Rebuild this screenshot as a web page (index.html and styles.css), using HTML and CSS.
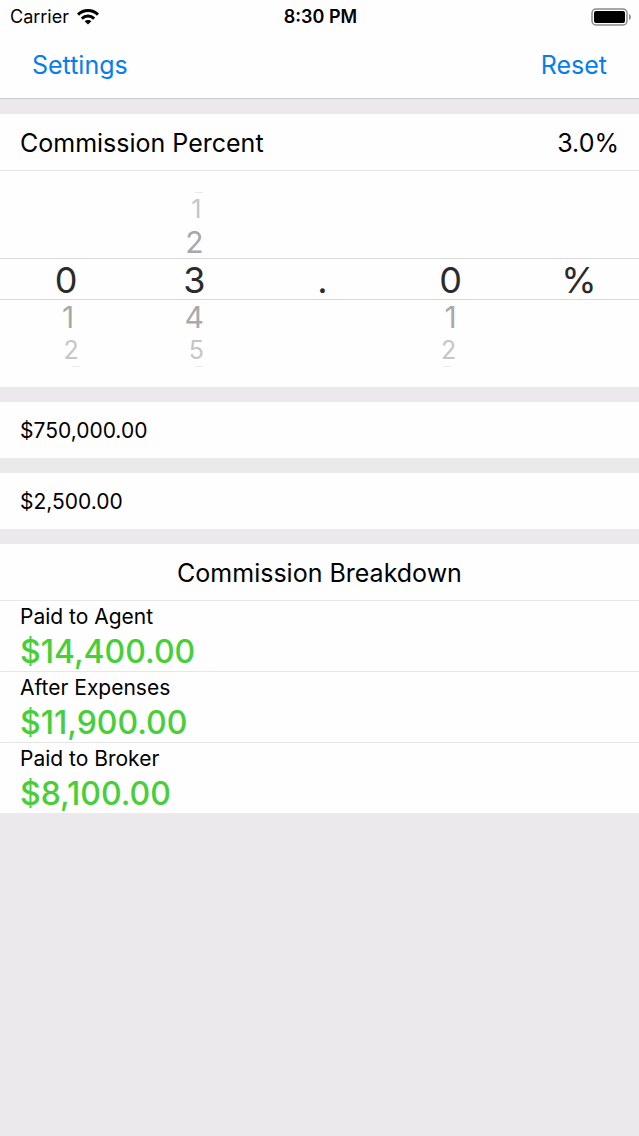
FILE: index.html
```
<!DOCTYPE html>
<html lang="en">

<head>
    <meta charset="UTF-8">
    <meta name="viewport" content="width=device-width, initial-scale=1.0">
    <link rel="stylesheet" href="styles.css">
    <title>Commission Calculator</title>
</head>

<body>
    <header>
        <div class="status">
            <div class="carrier">
                <span>Carrier</span>
                <svg class="wifi" viewBox="0 0 22 16" aria-hidden="true">
                    <path d="M1 5.600C6.800 .2 15.200 .2 21 5.600M4.800 9.600c3.600-3.400 8.800-3.400 12.400 0" fill="none" stroke="#000" stroke-width="3"/>
                    <path d="M7.600 12.300c2-1.900 4.800-1.900 6.800 0L11 15.600z"/>
                </svg>
            </div>
            <b class="time">8:30 PM</b>
            <svg class="battery" viewBox="0 0 40 18" aria-hidden="true">
                <rect x="1" y="1" width="35" height="16" rx="4" fill="none" stroke="#8b898d" stroke-width="1.500"/>
                <rect x="3" y="3" width="31" height="12" rx="2"/>
                <path d="M38 6c2.500 1 2.500 5 0 6z" fill="#8b898d"/>
            </svg>
        </div>
        <nav>
            <button type="button">Settings</button>
            <button type="button">Reset</button>
        </nav>
    </header>

    <main>
        <section>
            <div class="row">
                <h2>Commission Percent</h2>
                <output>3.0%</output>
            </div>
            <div class="picker">
                <div class="wheel tens edge-bottom" role="radiogroup" aria-label="Tens">
                    <label class="selected"><input type="radio" name="tens" checked>0</label>
                    <label class="near below"><input type="radio" name="tens">1</label>
                    <label class="far below"><input type="radio" name="tens">2</label>
                </div>
                <div class="wheel units edge-top edge-bottom" role="radiogroup" aria-label="Units">
                    <label class="far above"><input type="radio" name="units">1</label>
                    <label class="near above"><input type="radio" name="units">2</label>
                    <label class="selected"><input type="radio" name="units" checked>3</label>
                    <label class="near below"><input type="radio" name="units">4</label>
                    <label class="far below"><input type="radio" name="units">5</label>
                </div>
                <div class="wheel"><span class="selected">.</span></div>
                <div class="wheel tenths edge-bottom" role="radiogroup" aria-label="Tenths">
                    <label class="selected"><input type="radio" name="tenths" checked>0</label>
                    <label class="near below"><input type="radio" name="tenths">1</label>
                    <label class="far below"><input type="radio" name="tenths">2</label>
                </div>
                <div class="wheel"><span class="selected">%</span></div>
            </div>
        </section>

        <section>
            <input type="text" class="amount" aria-label="Sale price" value="$750,000.00">
        </section>

        <section>
            <input type="text" class="amount" aria-label="Expenses" value="$2,500.00">
        </section>

        <section>
            <div class="row centered">
                <h2>Commission Breakdown</h2>
            </div>
            <dl>
                <div class="result">
                    <dt>Paid to Agent</dt>
                    <dd>$14,400.00</dd>
                </div>
                <div class="result">
                    <dt>After Expenses</dt>
                    <dd>$11,900.00</dd>
                </div>
                <div class="result">
                    <dt>Paid to Broker</dt>
                    <dd>$8,100.00</dd>
                </div>
            </dl>
        </section>
    </main>
</body>

</html>
```
FILE: styles.css
```
* {
    box-sizing: border-box;
}

body {
    margin: 0;
    background: #ebe9ec;
    color: #000;
    font-family: Inter, "Liberation Sans", sans-serif;
}

header {
    background: #fefefe;
    border-bottom: 1px solid #c9c8cb;
}

.status {
    display: grid;
    grid-template-columns: 1fr auto 1fr;
    align-items: center;
    height: 33px;
    padding: 0 8px 0 10px;
    font-size: 18px;
}

.carrier {
    display: flex;
    align-items: center;
    gap: 8px;
}

.wifi {
    width: 22px;
    height: 16px;
}

.time {
    font-weight: 600;
}

.battery {
    width: 40px;
    height: 18px;
    justify-self: end;
}

nav {
    display: flex;
    justify-content: space-between;
    height: 65px;
    padding: 0 32px;
}

nav button {
    padding: 0;
    border: none;
    background: none;
    color: #087cf0;
    font: 25px/65px Inter, "Liberation Sans", sans-serif;
    cursor: pointer;
}

main {
    display: flex;
    flex-direction: column;
    gap: 15px;
    padding-top: 15px;
}

section {
    background: #fefefe;
    overflow: hidden;
}

.row {
    display: flex;
    align-items: center;
    justify-content: space-between;
    height: 57px;
    padding: 2px 20px 0;
    border-bottom: 1px solid #e6e5e7;
    font-size: 25px;
}

.centered {
    justify-content: center;
}

h2 {
    margin: 0;
    font-size: 25px;
    font-weight: 400;
}

/* Five equal wheels, the selected row sits between the two lines */
.picker {
    display: grid;
    grid-template-columns: repeat(5, 1fr);
    height: 216px;
    margin-right: -4px;
    padding-left: 2px;
    background: linear-gradient(#d9d8db, #d9d8db) 0 87px / 100% 1px no-repeat,
        linear-gradient(#d9d8db, #d9d8db) 0 128px / 100% 1px no-repeat;
}

.wheel {
    display: grid;
    grid-template-rows: 22px 32px 34px 41px 34px 32px 21px;
    justify-items: center;
    align-items: center;
}

.wheel input {
    position: absolute;
    opacity: 0;
    pointer-events: none;
}

.selected {
    grid-row: 4;
    padding-top: 2px;
    color: #2b2a2d;
    font-size: 36px;
    line-height: 39px;
}

.near {
    color: #a9a8ab;
    font-size: 30px;
    line-height: 34px;
}

.far {
    color: #c6c5c8;
    font-size: 25px;
    line-height: 32px;
}

.far.above {
    grid-row: 2;
}

.near.above {
    grid-row: 3;
}

.near.below {
    grid-row: 5;
}

.far.below {
    grid-row: 6;
}

.tens .near,
.units .far {
    padding-left: 4px;
}

.tens .far {
    padding-left: 10px;
}

.tenths .far {
    padding-right: 4px;
}

/* Sliver of the next number as it turns out of sight */
.edge-top::before,
.edge-bottom::after {
    content: "";
    width: 8px;
    height: 1px;
    background: #e9e8ea;
}

.edge-top::before {
    grid-row: 1;
    align-self: end;
}

.edge-bottom::after {
    grid-row: 7;
    align-self: start;
}

.units::before,
.units::after {
    margin-left: 10px;
}

.tens::after {
    margin-left: 20px;
}

.tenths::after {
    margin-right: 8px;
}

.amount {
    display: block;
    width: 100%;
    height: 56px;
    padding: 0 20px;
    border: none;
    background: none;
    color: #000;
    font: 21px Inter, "Liberation Sans", sans-serif;
}

dl {
    margin: 0;
}

.result {
    height: 71px;
    padding: 0 20px;
    border-bottom: 1px solid #e6e5e7;
}

.result:last-child {
    height: 70px;
    border-bottom: none;
}

dt {
    font-size: 21px;
    line-height: 32px;
}

dd {
    margin: 0;
    color: #47cf38;
    font-size: 32px;
    font-weight: 500;
    line-height: 38px;
}
```
